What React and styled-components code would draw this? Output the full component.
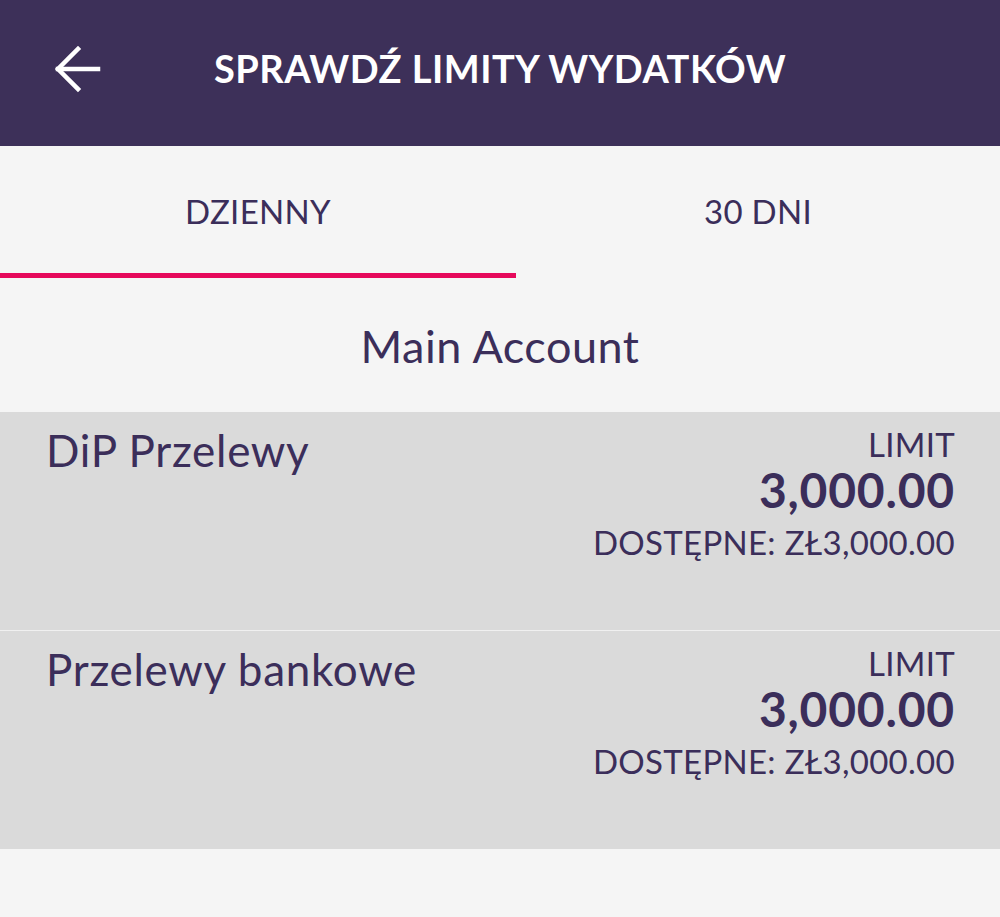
import React, { useState } from 'react';
import styled, { createGlobalStyle } from 'styled-components';

const colors = {
  purple: '#3d3059',
  text: '#3b2e5a',
  page: '#f5f5f5',
  row: '#dadada',
  pink: '#e6095b',
};

const GlobalStyle = createGlobalStyle`
  html, body {
    margin: 0;
    padding: 0;
    background: ${colors.page};
    font-family: Lato, "Open Sans", "Liberation Sans", sans-serif;
    color: ${colors.text};
  }
`;

const Screen = styled.div`
  width: 1000px;
  height: 917px;
  background: ${colors.page};
  display: flex;
  flex-flow: column;
`;

const TopBar = styled.header`
  height: 146px;
  background: ${colors.purple};
  display: grid;
  grid-template-columns: 160px 1fr 160px;
  align-items: center;
  color: #fff;
`;

const BackButton = styled.button`
  border: 0;
  background: none;
  padding: 0 0 0 54px;
  height: 48px;
  display: flex;
  align-items: center;
  cursor: pointer;
  margin-bottom: 8px;
`;

const Title = styled.h1`
  margin: 0;
  text-align: center;
  font-size: 38px;
  font-weight: 700;
  letter-spacing: 0.5px;
  padding-bottom: 10px;
`;

const Tabs = styled.nav`
  height: 132px;
  display: grid;
  grid-template-columns: 516px 1fr;
`;

const Tab = styled.div`
  display: flex;
  align-items: center;
  justify-content: center;
  font-size: 33px;
  letter-spacing: 0.3px;
  padding-top: 2px;
  border-bottom: 5px solid ${(p) => (p.$active ? colors.pink : 'transparent')};
  cursor: pointer;
`;

const AccountName = styled.div`
  height: 134px;
  display: flex;
  align-items: center;
  justify-content: center;
  font-size: 45px;
  letter-spacing: 0.5px;
  padding-top: 2px;
  box-sizing: border-box;
`;

const LimitList = styled.div`
  display: flex;
  flex-flow: column;
  gap: 1px;
  background: #f0f0f0;
`;

const LimitRow = styled.div`
  height: 218px;
  background: ${colors.row};
  box-sizing: border-box;
  padding: 14px 45px 0 46px;
  display: flex;
  justify-content: space-between;
  align-items: flex-start;
`;

const RowName = styled.div`
  font-size: 44px;
  letter-spacing: 0.7px;
  line-height: 48px;
`;

const Amounts = styled.div`
  display: flex;
  flex-flow: column;
  align-items: flex-end;
`;

const Label = styled.span`
  font-size: 33px;
  line-height: 36px;
  letter-spacing: 0.3px;
`;

const Amount = styled.span`
  font-size: 48px;
  font-weight: 700;
  line-height: 56px;
  letter-spacing: 0.8px;
  margin-bottom: 6px;
`;

const Arrow = () => (
  <svg width="48" height="48" viewBox="0 0 48 48" fill="none" stroke="#fff" strokeWidth="4.5" strokeLinecap="square">
    <path d="M4 24h40" />
    <path d="M24 4L4 24l20 20" />
  </svg>
);

const limits = [
  { name: 'DiP Przelewy', limit: '3,000.00', available: 'ZŁ3,000.00' },
  { name: 'Przelewy bankowe', limit: '3,000.00', available: 'ZŁ3,000.00' },
];

const App = () => {
  const [tab, setTab] = useState(0);
  return (
    <Screen>
      <GlobalStyle />
      <TopBar>
        <BackButton aria-label="Wstecz">
          <Arrow />
        </BackButton>
        <Title>SPRAWDŹ LIMITY WYDATKÓW</Title>
        <div />
      </TopBar>
      <Tabs>
        <Tab $active={tab === 0} onClick={() => setTab(0)}>DZIENNY</Tab>
        <Tab $active={tab === 1} onClick={() => setTab(1)}>30 DNI</Tab>
      </Tabs>
      <AccountName>Main Account</AccountName>
      <LimitList>
        {limits.map((item) => (
          <LimitRow key={item.name}>
            <RowName>{item.name}</RowName>
            <Amounts>
              <Label>LIMIT</Label>
              <Amount>{item.limit}</Amount>
              <Label>DOSTĘPNE: {item.available}</Label>
            </Amounts>
          </LimitRow>
        ))}
      </LimitList>
    </Screen>
  );
};

export default App;
